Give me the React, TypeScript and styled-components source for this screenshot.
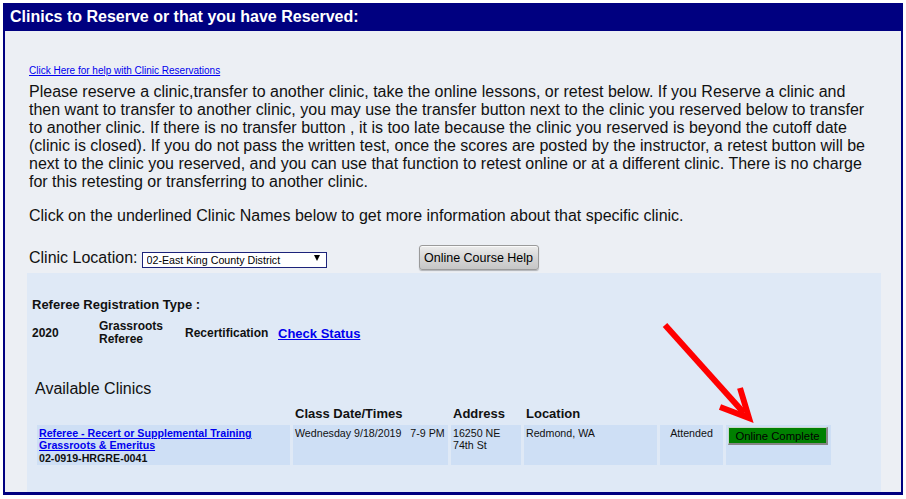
import React from "react";
import styled, { createGlobalStyle } from "styled-components";

const GlobalStyle = createGlobalStyle`
  html, body { margin: 0; padding: 0; background: #ffffff; }
  body { font-family: "Liberation Sans", Arial, sans-serif; color: #111; }
`;

const Frame = styled.div`
  position: relative;
  margin: 3px;
  width: 900px;
  box-sizing: border-box;
  border: 2px solid #000080;
  border-top: 0;
  border-bottom-width: 3px;
  background: #eceff4;
`;

const Header = styled.div`
  margin: 0 -2px;
  height: 28px;
  line-height: 28px;
  padding-left: 7px;
  background: #000080;
  color: #ffffff;
  font-weight: bold;
  font-size: 16px;
`;

const Intro = styled.div`
  padding: 34px 24px 0 24px;
`;

const HelpLink = styled.a`
  display: block;
  font-size: 10px;
  line-height: 12px;
  color: #0000ee;
  text-decoration: underline;
`;

const Para = styled.p<{ $gap: number }>`
  margin: ${(p) => p.$gap}px 0 0;
  font-size: 16px;
  line-height: 18px;
  color: #111;
`;

const LocationRow = styled.div`
  display: flex;
  align-items: center;
  height: 25px;
  margin-top: 20px;
`;

const Label = styled.span`
  font-size: 16px;
  line-height: 18px;
`;

const SelectWrap = styled.div`
  position: relative;
  margin-left: 4px;
  width: 185px;
  height: 16px;
`;

const Select = styled.select`
  appearance: none;
  -webkit-appearance: none;
  width: 185px;
  height: 16px;
  box-sizing: border-box;
  border: 1px solid #1c237a;
  border-radius: 0;
  background: #ffffff;
  font-family: "Liberation Sans", Arial, sans-serif;
  font-size: 10.7px;
  color: #000;
  padding: 0 0 0 4px;
  margin: 0;
  outline: none;
`;

const SelectArrow = styled.span`
  position: absolute;
  right: 7px;
  top: 5px;
  width: 0;
  height: 0;
  border-left: 3px solid transparent;
  border-right: 3px solid transparent;
  border-top: 6px solid #000;
  pointer-events: none;
`;

const GrayButton = styled.button`
  margin-left: 92px;
  width: 120px;
  height: 25px;
  box-sizing: border-box;
  border: 1px solid #9a9a9a;
  border-radius: 3px;
  background: linear-gradient(#ececec, #d6d6d6 50%, #c6c6c6);
  box-shadow: inset 0 1px 0 #fafafa, 0 1px 1px rgba(0, 0, 0, 0.25);
  font-family: "Liberation Sans", Tahoma, sans-serif;
  font-size: 12.5px;
  color: #000;
  padding: 0;
`;

const Panel = styled.div`
  margin: 3px 20px 0 22px;
  background: #dfe9f6;
  padding: 24px 0 27px 5px;
`;

const RegTitle = styled.div`
  font-size: 13px;
  line-height: 15px;
  font-weight: bold;
  color: #111;
`;

const RegRow = styled.div`
  display: grid;
  grid-template-columns: 67px 86px 93px auto;
  align-items: center;
  margin-top: 8px;
  font-size: 12px;
  line-height: 13px;
  font-weight: bold;
  color: #111;
`;

const StatusLink = styled.a`
  font-size: 13px;
  font-weight: bold;
  color: #0000ee;
  text-decoration: underline;
  justify-self: start;
`;

const SectionTitle = styled.div`
  margin: 34px 0 0 3px;
  font-size: 16px;
  line-height: 18px;
  color: #111;
`;

const ClinicTable = styled.div`
  display: grid;
  grid-template-columns: 253px 155px 70px 133px 63px 105px;
  column-gap: 3px;
  row-gap: 4px;
  margin: 8px 0 0 5px;
`;

const HeadCell = styled.div`
  padding-left: 2px;
  font-size: 13px;
  line-height: 15px;
  font-weight: bold;
  color: #111;
`;

const Cell = styled.div<{ $center?: boolean }>`
  height: 40px;
  box-sizing: border-box;
  padding: 2px;
  background: #cedff5;
  font-size: 10.67px;
  line-height: 12.3px;
  color: #111;
  white-space: nowrap;
  text-align: ${(p) => (p.$center ? "center" : "left")};
`;

const ClinicLink = styled.a`
  font-weight: bold;
  color: #0000ee;
  text-decoration: underline;
`;

const Code = styled.div`
  font-weight: bold;
`;

const GreenButton = styled.button`
  display: block;
  width: 100px;
  height: 18px;
  box-sizing: border-box;
  padding: 0;
  background: #008000;
  border-top: 1px solid #c8d8c8;
  border-left: 1px solid #c8d8c8;
  border-right: 2px solid #858585;
  border-bottom: 2px solid #858585;
  font-family: "Liberation Sans", Arial, sans-serif;
  font-size: 11.3px;
  line-height: 14px;
  color: #000;
`;

const ArrowSvg = styled.svg`
  position: absolute;
  left: 650px;
  top: 312px;
  pointer-events: none;
`;

export default function App() {
  return (
    <>
      <GlobalStyle />
      <Frame>
        <Header>Clinics to Reserve or that you have Reserved:</Header>
        <Intro>
          <HelpLink href="#">Click Here for help with Clinic Reservations</HelpLink>
          <Para $gap={6}>
            Please reserve a clinic,transfer to another clinic, take the online lessons, or retest below. If you Reserve a clinic and
            then want to transfer to another clinic, you may use the transfer button next to the clinic you reserved below to transfer
            to another clinic. If there is no transfer button , it is too late because the clinic you reserved is beyond the cutoff date
            (clinic is closed). If you do not pass the written test, once the scores are posted by the instructor, a retest button will be
            next to the clinic you reserved, and you can use that function to retest online or at a different clinic. There is no charge
            for this retesting or transferring to another clinic.
          </Para>
          <Para $gap={16}>Click on the underlined Clinic Names below to get more information about that specific clinic.</Para>
          <LocationRow>
            <Label>Clinic Location:</Label>
            <SelectWrap>
              <Select defaultValue="02">
                <option value="02">02-East King County District</option>
              </Select>
              <SelectArrow />
            </SelectWrap>
            <GrayButton>Online Course Help</GrayButton>
          </LocationRow>
        </Intro>
        <Panel>
          <RegTitle>Referee Registration Type :</RegTitle>
          <RegRow>
            <span>2020</span>
            <span>
              Grassroots
              <br />
              Referee
            </span>
            <span>Recertification</span>
            <StatusLink href="#">Check Status</StatusLink>
          </RegRow>
          <SectionTitle>Available Clinics</SectionTitle>
          <ClinicTable>
            <div />
            <HeadCell>Class Date/Times</HeadCell>
            <HeadCell>Address</HeadCell>
            <HeadCell>Location</HeadCell>
            <div />
            <div />
            <Cell>
              <ClinicLink href="#">
                Referee - Recert or Supplemental Training
                <br />
                Grassroots &amp; Emeritus
              </ClinicLink>
              <Code>02-0919-HRGRE-0041</Code>
            </Cell>
            <Cell>Wednesday 9/18/2019&nbsp;&nbsp;&nbsp;7-9 PM</Cell>
            <Cell>
              16250 NE
              <br />
              74th St
            </Cell>
            <Cell>Redmond, WA</Cell>
            <Cell $center>Attended</Cell>
            <Cell>
              <GreenButton>Online Complete</GreenButton>
            </Cell>
          </ClinicTable>
        </Panel>
        <ArrowSvg width="110" height="115" viewBox="0 0 110 115">
          <line x1="10" y1="10" x2="89" y2="98" stroke="#ff0000" strokeWidth="6" />
          <polyline points="65,92 94,103 85,73" fill="none" stroke="#ff0000" strokeWidth="6" strokeLinejoin="miter" />
        </ArrowSvg>
      </Frame>
    </>
  );
}
